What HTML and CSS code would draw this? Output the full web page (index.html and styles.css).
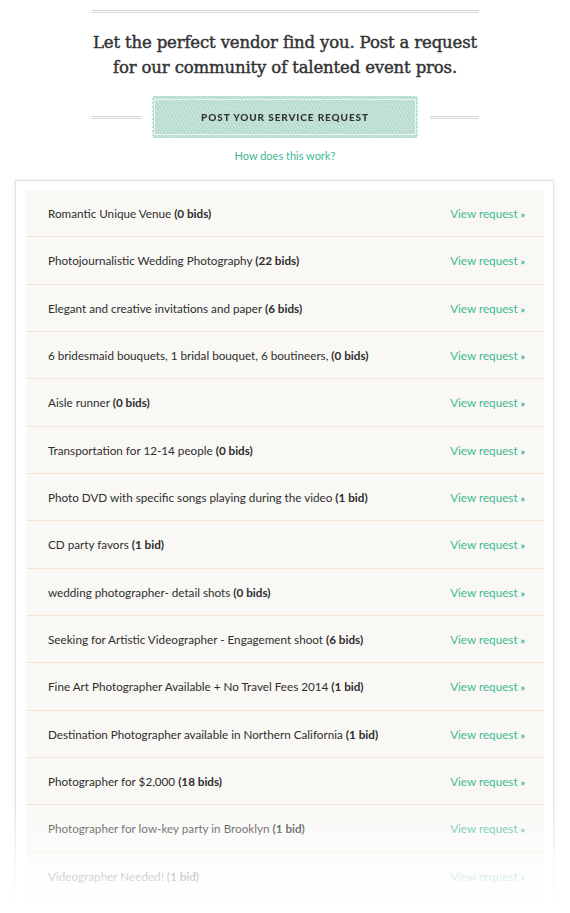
FILE: index.html
```html
<!DOCTYPE html>
<html>
<head>
<meta charset="utf-8">
<link rel="stylesheet" href="styles.css">
</head>
<body>
<div class="page">
  <header class="intro">
    <div class="double-rule"></div>
    <h1 class="headline">Let the perfect vendor find you. Post a request for our community of talented event pros.</h1>
    <div class="cta-row">
      <span class="side-rule"></span>
      <a class="ribbon" href="#"><span class="ribbon-inner">POST YOUR SERVICE REQUEST</span></a>
      <span class="side-rule"></span>
    </div>
    <a class="how" href="#">How does this work?</a>
  </header>

  <section class="card">
    <ul class="requests">
      <li class="req"><span class="title">Romantic Unique Venue <b>(0 bids)</b></span><a class="view" href="#">View request <span class="raquo">»</span></a></li>
      <li class="req"><span class="title">Photojournalistic Wedding Photography <b>(22 bids)</b></span><a class="view" href="#">View request <span class="raquo">»</span></a></li>
      <li class="req"><span class="title">Elegant and creative invitations and paper <b>(6 bids)</b></span><a class="view" href="#">View request <span class="raquo">»</span></a></li>
      <li class="req"><span class="title">6 bridesmaid bouquets, 1 bridal bouquet, 6 boutineers, <b>(0 bids)</b></span><a class="view" href="#">View request <span class="raquo">»</span></a></li>
      <li class="req"><span class="title">Aisle runner <b>(0 bids)</b></span><a class="view" href="#">View request <span class="raquo">»</span></a></li>
      <li class="req"><span class="title">Transportation for 12-14 people <b>(0 bids)</b></span><a class="view" href="#">View request <span class="raquo">»</span></a></li>
      <li class="req"><span class="title">Photo DVD with specific songs playing during the video <b>(1 bid)</b></span><a class="view" href="#">View request <span class="raquo">»</span></a></li>
      <li class="req"><span class="title">CD party favors <b>(1 bid)</b></span><a class="view" href="#">View request <span class="raquo">»</span></a></li>
      <li class="req"><span class="title">wedding photographer- detail shots <b>(0 bids)</b></span><a class="view" href="#">View request <span class="raquo">»</span></a></li>
      <li class="req"><span class="title">Seeking for Artistic Videographer - Engagement shoot <b>(6 bids)</b></span><a class="view" href="#">View request <span class="raquo">»</span></a></li>
      <li class="req"><span class="title">Fine Art Photographer Available + No Travel Fees 2014 <b>(1 bid)</b></span><a class="view" href="#">View request <span class="raquo">»</span></a></li>
      <li class="req"><span class="title">Destination Photographer available in Northern California <b>(1 bid)</b></span><a class="view" href="#">View request <span class="raquo">»</span></a></li>
      <li class="req"><span class="title">Photographer for $2,000 <b>(18 bids)</b></span><a class="view" href="#">View request <span class="raquo">»</span></a></li>
      <li class="req"><span class="title">Photographer for low-key party in Brooklyn <b>(1 bid)</b></span><a class="view" href="#">View request <span class="raquo">»</span></a></li>
      <li class="req"><span class="title">Videographer Needed! <b>(1 bid)</b></span><a class="view" href="#">View request <span class="raquo">»</span></a></li>
    </ul>
  </section>
  <div class="fade"></div>
</div>
</body>
</html>
```

FILE: styles.css
```css
html, body {
  margin: 0;
  padding: 0;
  background: #ffffff;
}
body {
  font-family: "Lato", "Open Sans", sans-serif;
  color: #333;
  overflow: hidden;
  height: 913px;
}
.page {
  position: relative;
  width: 570px;
  height: 913px;
  overflow: hidden;
}
.intro {
  width: 387px;
  margin: 0 auto;
  padding-top: 10px;
  display: flex;
  flex-direction: column;
  align-items: center;
}
.double-rule {
  align-self: stretch;
  height: 1px;
  border-top: 1px solid #d2d2d2;
  border-bottom: 1px solid #d8d8d8;
}
.headline {
  margin: 17px 0 0;
  font-family: "DejaVu Serif", serif;
  font-weight: normal;
  font-size: 16.5px;
  line-height: 25px;
  color: #333;
  text-align: center;
  letter-spacing: -0.15px;
  -webkit-text-stroke: 0.45px #333;
}
.cta-row {
  align-self: stretch;
  margin-top: 16px;
  display: flex;
  align-items: center;
  justify-content: space-between;
}
.side-rule {
  width: 49px;
  height: 1px;
  border-top: 1px solid #d4d4d4;
  border-bottom: 1px solid #d4d4d4;
}
.ribbon {
  display: block;
  width: 268px;
  height: 42px;
  padding: 3px;
  box-sizing: border-box;
  text-decoration: none;
  background-color: #b8dccd;
  background-image: repeating-linear-gradient(60deg, rgba(255,255,255,0.3) 0 1px, rgba(255,255,255,0) 1px 3px);
  -webkit-mask: radial-gradient(circle at 0 50%, transparent 1.6px, #000 1.8px) left / 4px 4px repeat-y,
                radial-gradient(circle at 100% 50%, transparent 1.6px, #000 1.8px) right / 4px 4px repeat-y,
                linear-gradient(#000, #000) center / calc(100% - 6px) 100% no-repeat;
  mask: radial-gradient(circle at 0 50%, transparent 1.6px, #000 1.8px) left / 4px 4px repeat-y,
        radial-gradient(circle at 100% 50%, transparent 1.6px, #000 1.8px) right / 4px 4px repeat-y,
        linear-gradient(#000, #000) center / calc(100% - 6px) 100% no-repeat;
}
.ribbon-inner {
  display: flex;
  align-items: center;
  justify-content: center;
  height: 100%;
  box-sizing: border-box;
  border: 1px solid rgba(255,255,255,0.7);
  font-size: 10px;
  font-weight: 900;
  letter-spacing: 0.9px;
  color: #333;
}
.how {
  margin-top: 11px;
  font-size: 11px;
  color: #3db892;
  text-decoration: none;
}
.card {
  margin: 18px 16px 0 15px;
  padding: 9px 9px 40px 10px;
  background: #fff;
  border: 1px solid #e2e2e2;
  box-shadow: 0 0 3px rgba(0,0,0,0.1);
}
.requests {
  list-style: none;
  margin: 0;
  padding: 0;
  background: #f9f8f5;
}
.req {
  display: flex;
  align-items: center;
  justify-content: space-between;
  height: 47.33px;
  box-sizing: border-box;
  padding: 0 19px 0 22px;
  border-bottom: 1px solid #f4e3d0;
  font-size: 11.7px;
}
.title {
  color: #2e2e2e;
}
.title b {
  font-weight: 700;
}
.view {
  color: #3db892;
  text-decoration: none;
  font-size: 11.7px;
}
.raquo {
  font-size: 9.5px;
  font-weight: 900;
}
.fade {
  position: absolute;
  left: 0;
  right: 0;
  top: 800px;
  height: 113px;
  background: linear-gradient(to bottom, rgba(255,255,255,0) 0%, rgba(255,255,255,0.45) 35%, rgba(255,255,255,0.85) 75%, #fff 100%);
  pointer-events: none;
}
```
